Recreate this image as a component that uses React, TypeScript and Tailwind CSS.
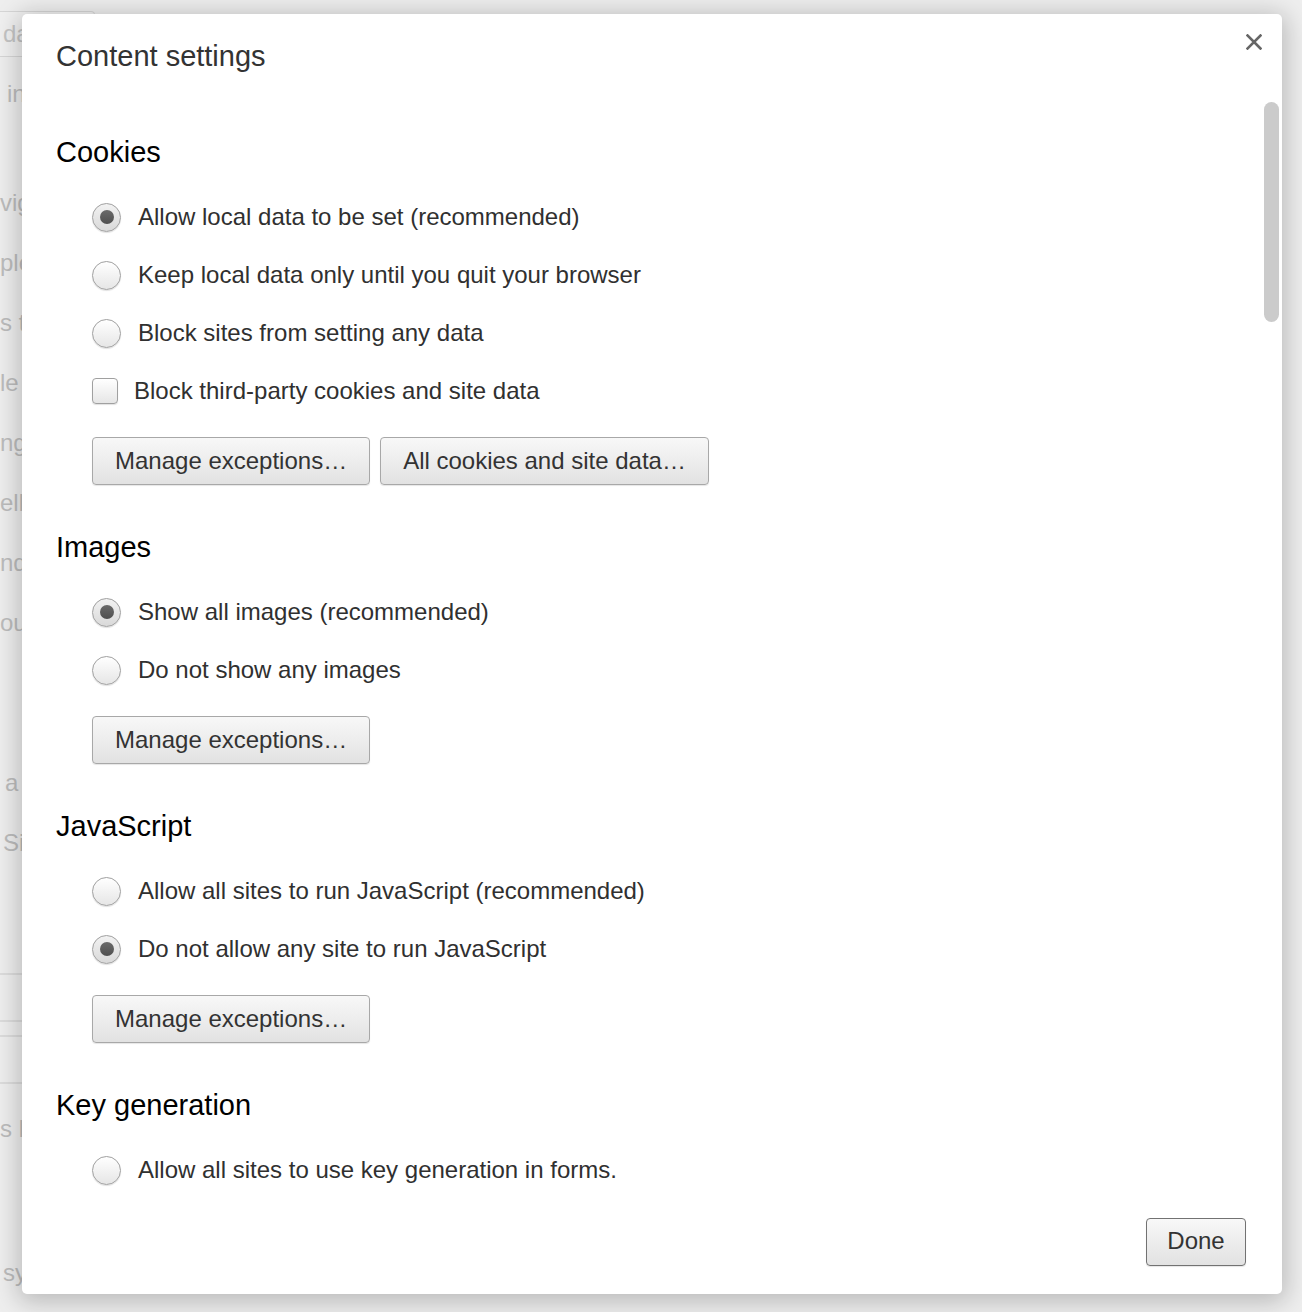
import React from "react";

function Radio({ checked }: { checked?: boolean }) {
  return (
    <span
      className={
        "flex h-[29px] w-[29px] shrink-0 items-center justify-center rounded-full border border-[#a0a0a0] shadow-[0_1px_1px_rgba(0,0,0,0.12)] bg-linear-to-b " +
        (checked ? "from-[#f2f2f2] to-[#d9d9d9]" : "from-white to-[#e6e6e6]")
      }
    >
      {checked && <span className="h-[14px] w-[14px] rounded-full bg-linear-to-b from-[#6a6a6a] to-[#4f4f4f]" />}
    </span>
  );
}

function RadioRow({ label, checked }: { label: string; checked?: boolean }) {
  return (
    <div className="flex h-[58px] items-center gap-[17px]">
      <Radio checked={checked} />
      <span className="text-[24px] leading-[30px] text-[#303030]">{label}</span>
    </div>
  );
}

function CheckRow({ label }: { label: string }) {
  return (
    <div className="flex h-[58px] items-center gap-[16px]">
      <span className="h-[26px] w-[26px] shrink-0 rounded-[4px] border border-[#a0a0a0] bg-linear-to-b from-white to-[#e6e6e6] shadow-[0_1px_1px_rgba(0,0,0,0.12)]" />
      <span className="text-[24px] leading-[30px] text-[#303030]">{label}</span>
    </div>
  );
}

function Btn({ children, dark }: { children: React.ReactNode; dark?: boolean }) {
  return (
    <button
      className={
        "h-[48px] rounded-[4px] border bg-linear-to-b from-[#f8f8f8] to-[#e2e2e2] text-[24px] leading-[30px] text-[#333] shadow-[0_1px_1px_rgba(0,0,0,0.1)] " +
        (dark ? "w-[100px] border-[#727272] pb-[3px]" : "border-[#a8a8a8] px-[22px]")
      }
    >
      {children}
    </button>
  );
}

function Heading({ children }: { children: React.ReactNode }) {
  return <h2 className="text-[29px] leading-[34px] text-black">{children}</h2>;
}

function BgText({ children, className = "" }: { children: React.ReactNode; className?: string }) {
  return (
    <div className={"flex h-[60px] items-center whitespace-nowrap text-[24px] text-[#bcbcbc] " + className}>
      {children}
    </div>
  );
}

export default function App() {
  return (
    <div className="relative h-[1312px] w-[1302px] overflow-hidden bg-[#eeeeee] font-['Liberation_Sans',Arial,Helvetica,sans-serif]">
      {/* Faded page behind the dialog */}
      <div className="flex w-[300px] flex-col">
        <div className="mt-[11px] flex h-[46px] w-[95px] items-center rounded-r-[4px] border border-l-0 border-[#d6d6d6] bg-[#f0f0f0] pl-[3px] text-[24px] text-[#c4c4c4]">
          date
        </div>
        <div className="mt-[17px] flex h-[40px] items-center pl-[7px] text-[24px] text-[#bcbcbc]">internet</div>
        <div className="mt-[59px] flex flex-col">
          <BgText>vigation</BgText>
          <BgText>ple settings</BgText>
          <BgText>s that</BgText>
          <BgText>le</BgText>
          <BgText>nge</BgText>
          <BgText>elligence</BgText>
          <BgText>nd</BgText>
          <BgText>ou</BgText>
        </div>
        <div className="mt-[100px] flex flex-col">
          <BgText className="pl-[5px]">a</BgText>
          <BgText className="pl-[3px]">Sign</BgText>
        </div>
        <div className="mt-[100px] h-[2px] bg-[#dcdcdc]" />
        <div className="mt-[45px] h-[2px] bg-[#dcdcdc]" />
        <div className="mt-[13px] h-[2px] bg-[#dcdcdc]" />
        <div className="mt-[45px] h-[2px] bg-[#dcdcdc]" />
        <BgText className="mt-[15px]">s like</BgText>
        <BgText className="mt-[84px] pl-[3px]">sync</BgText>
      </div>

      {/* Dialog overlay */}
      <div className="absolute left-[22px] top-[14px] flex h-[1280px] w-[1260px] flex-col rounded-[5px] bg-white shadow-[0_4px_24px_4px_rgba(0,0,0,0.22)]">
        <div className="relative h-[81px] shrink-0 pl-[34px] pt-[25px]">
          <h1 className="text-[29px] leading-[34px] text-[#333]">Content settings</h1>
          <button className="absolute right-[20px] top-[20px] flex h-[16px] w-[16px] items-center justify-center">
            <svg width="16" height="16" viewBox="0 0 16 16">
              <path d="M1.5 1.5 L14.5 14.5 M14.5 1.5 L1.5 14.5" stroke="#666" strokeWidth="2.6" strokeLinecap="square" />
            </svg>
          </button>
        </div>

        <div className="flex h-[1105px] shrink-0 overflow-hidden">
          <div className="flex flex-1 flex-col pl-[34px] pt-[40px]">
            <section>
              <Heading>Cookies</Heading>
              <div className="mt-[19px] pl-[36px]">
                <RadioRow label="Allow local data to be set (recommended)" checked />
                <RadioRow label="Keep local data only until you quit your browser" />
                <RadioRow label="Block sites from setting any data" />
                <CheckRow label="Block third-party cookies and site data" />
                <div className="mt-[17px] flex gap-[10px]">
                  <Btn>Manage exceptions…</Btn>
                  <Btn>All cookies and site data…</Btn>
                </div>
              </div>
            </section>

            <section className="mt-[45px]">
              <Heading>Images</Heading>
              <div className="mt-[19px] pl-[36px]">
                <RadioRow label="Show all images (recommended)" checked />
                <RadioRow label="Do not show any images" />
                <div className="mt-[17px] flex gap-[10px]">
                  <Btn>Manage exceptions…</Btn>
                </div>
              </div>
            </section>

            <section className="mt-[45px]">
              <Heading>JavaScript</Heading>
              <div className="mt-[19px] pl-[36px]">
                <RadioRow label="Allow all sites to run JavaScript (recommended)" />
                <RadioRow label="Do not allow any site to run JavaScript" checked />
                <div className="mt-[17px] flex gap-[10px]">
                  <Btn>Manage exceptions…</Btn>
                </div>
              </div>
            </section>

            <section className="mt-[45px]">
              <Heading>Key generation</Heading>
              <div className="mt-[19px] pl-[36px]">
                <RadioRow label="Allow all sites to use key generation in forms." />
              </div>
            </section>
          </div>

          <div className="mr-[3px] w-[15px] shrink-0">
            <div className="mt-[7px] h-[220px] rounded-full bg-[#cbcbcb]" />
          </div>
        </div>

        <div className="flex flex-1 justify-end pr-[36px] pt-[18px]">
          <Btn dark>Done</Btn>
        </div>
      </div>
    </div>
  );
}
